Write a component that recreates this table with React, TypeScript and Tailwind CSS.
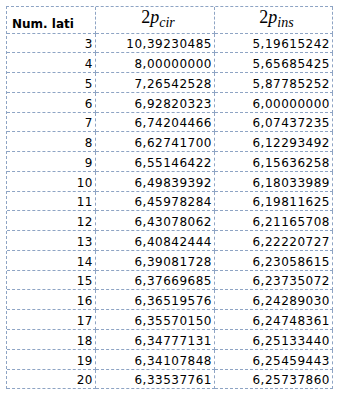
import React from 'react';

const rows: [number, string, string][] = [
  [3, '10,39230485', '5,19615242'],
  [4, '8,00000000', '5,65685425'],
  [5, '7,26542528', '5,87785252'],
  [6, '6,92820323', '6,00000000'],
  [7, '6,74204466', '6,07437235'],
  [8, '6,62741700', '6,12293492'],
  [9, '6,55146422', '6,15636258'],
  [10, '6,49839392', '6,18033989'],
  [11, '6,45978284', '6,19811625'],
  [12, '6,43078062', '6,21165708'],
  [13, '6,40842444', '6,22220727'],
  [14, '6,39081728', '6,23058615'],
  [15, '6,37669685', '6,23735072'],
  [16, '6,36519576', '6,24289030'],
  [17, '6,35570150', '6,24748361'],
  [18, '6,34777131', '6,25133440'],
  [19, '6,34107848', '6,25459443'],
  [20, '6,33537761', '6,25737860'],
];

// row heights (px, incl. bottom border) so the grid lines land where Excel put them
const shortRows = new Set([0, 4, 8, 12, 17]);

const cell = 'border-r border-b border-dashed border-[#8ea4c4]';
const num = `${cell} flex items-end justify-end pr-[2px] pb-[1px] leading-[14px] text-[12px] tracking-[0.5px] text-black`;

const MathHead = ({ sub }: { sub: string }) => (
  <div className={`${cell} flex items-end justify-center pl-[6px] pb-[7px] text-black`} style={{ fontFamily: '"Liberation Serif", serif' }}>
    <span className="text-[18px] leading-[18px]">
      2<i>p</i>
      <sub className="text-[14px] italic">{sub}</sub>
    </span>
  </div>
);

export default function App() {
  return (
    <div className="w-[342px] h-[393px] bg-white pt-[6px] pl-[6px]" style={{ fontFamily: '"DejaVu Sans", Verdana, sans-serif' }}>
      <div className="grid w-[327px] grid-cols-[89px_119px_118px] border-l border-t border-dashed border-[#8ea4c4]">
        <div className={`${cell} h-[27px] flex items-end pl-[5px] pb-[2px] leading-[14px] text-[12px] font-bold text-black`}>
          Num. lati
        </div>
        <MathHead sub="cir" />
        <MathHead sub="ins" />
        {rows.map(([n, cir, ins], i) => {
          const h = shortRows.has(i) ? 'h-[19px]' : 'h-[20px]';
          return (
            <React.Fragment key={n}>
              <div className={`${num} ${h}`}>{n}</div>
              <div className={`${num} ${h}`}>{cir}</div>
              <div className={`${num} ${h}`}>{ins}</div>
            </React.Fragment>
          );
        })}
      </div>
    </div>
  );
}
